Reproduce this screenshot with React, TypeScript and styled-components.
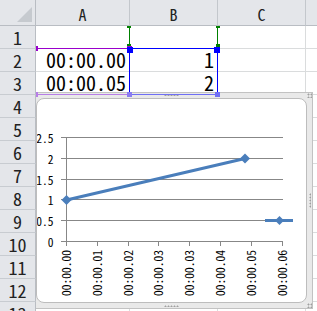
import React from 'react';
import styled, { createGlobalStyle, css } from 'styled-components';

const GlobalStyle = createGlobalStyle`
  html, body {
    margin: 0;
    padding: 0;
    background: #fff;
    overflow: hidden;
  }
  body {
    font-family: "Noto Sans Mono CJK JP", "Noto Sans CJK JP", sans-serif;
    color: #000;
  }
`;

const FONT = '"Noto Sans Mono CJK JP", "Noto Sans CJK JP", sans-serif';

// column D is only a sliver at the right edge, its letter is off screen
const columns = [
  { name: 'A', width: 94 },
  { name: 'B', width: 88 },
  { name: 'C', width: 88 },
  { name: '', width: 88 },
];
const gridColumns = columns.map((c) => `${c.width}px`).join(' ');

const cellData: string[][] = [
  ['', ''],
  ['00:00.00', '1'],
  ['00:00.05', '2'],
];

const rowCount = 13;

const Sheet = styled.div`
  width: 317px;
  height: 311px;
  overflow: hidden;
  display: grid;
  grid-template-columns: 36px 1fr;
  grid-template-rows: 26px 1fr;
`;

const Corner = styled.div`
  position: relative;
  box-sizing: border-box;
  background: #e4e6ea;
  border-right: 1px solid #b9bdc3;
  border-bottom: 1px solid #b9bdc3;
  &::after {
    content: '';
    position: absolute;
    right: 3px;
    bottom: 3px;
    width: 15px;
    height: 15px;
    background: #c6cacf;
    clip-path: polygon(100% 0, 100% 100%, 0 100%);
  }
`;

const ColumnHeaders = styled.div`
  display: grid;
  grid-template-columns: ${gridColumns};
  overflow: hidden;
`;

const ColumnHeader = styled.div`
  box-sizing: border-box;
  height: 26px;
  padding-top: 3px;
  background: #e4e6ea;
  border-right: 1px solid #c3c7cc;
  border-bottom: 1px solid #b9bdc3;
  text-align: center;
  font-size: 16px;
  font-weight: 300;
  line-height: 22px;
  color: #222;
`;

const RowHeaders = styled.div`
  display: grid;
  grid-auto-rows: 23px;
  overflow: hidden;
`;

const RowHeader = styled.div`
  box-sizing: border-box;
  background: #e4e6ea;
  border-right: 1px solid #b9bdc3;
  border-bottom: 1px solid #c8ccd1;
  text-align: center;
  font-size: 18px;
  font-weight: 300;
  line-height: 22px;
  color: #222;
  overflow: hidden;
`;

const Cells = styled.div`
  position: relative;
  overflow: hidden;
`;

const CellGrid = styled.div`
  display: grid;
  grid-template-columns: ${gridColumns};
  grid-auto-rows: 23px;
`;

const Cell = styled.div`
  box-sizing: border-box;
  border-right: 1px solid #dadcdd;
  border-bottom: 1px solid #dadcdd;
  padding-right: 3px;
  text-align: right;
  font-size: 20px;
  font-weight: 300;
  line-height: 21px;
  white-space: nowrap;
  overflow: hidden;
`;

// same grid as the cells, laid over them, for the chart's source ranges
const RangeLayer = styled.div`
  position: absolute;
  inset: 0;
  display: grid;
  grid-template-columns: ${gridColumns};
  grid-auto-rows: 23px;
  pointer-events: none;
  z-index: 3;
`;

const RangeBox = styled.div<{ $col: string; $row: string; $color: string; $bottom: string }>`
  position: relative;
  grid-column: ${(p) => p.$col};
  grid-row: ${(p) => p.$row};
  margin: -1px 0 0 -1px;
  border: 1px solid ${(p) => p.$color};
  border-bottom-color: ${(p) => p.$bottom};
`;

type Corner = 'tl' | 'tr' | 'bl' | 'br';

const cornerCss = (corner: Corner, off: number) => css`
  ${corner[0] === 't' ? `top: ${off}px;` : `bottom: ${off}px;`}
  ${corner[1] === 'l' ? 'left: -3px;' : 'right: -3px;'}
`;

const Handle = styled.span<{ $corner: Corner; $color: string; $size?: number; $off?: number }>`
  position: absolute;
  width: ${(p) => p.$size ?? 5}px;
  height: ${(p) => p.$size ?? 5}px;
  background: ${(p) => p.$color};
  ${(p) => cornerCss(p.$corner, p.$off ?? -3)}
`;

const ChartFrame = styled.div`
  position: absolute;
  left: -6px;
  top: 66px;
  width: 283px;
  height: 217px;
  box-sizing: border-box;
  border: 1px solid #c2c2c2;
  background: #e9e9e9;
  padding: 5px;
  z-index: 2;
`;

const ChartArea = styled.div`
  width: 271px;
  height: 205px;
  box-sizing: border-box;
  background: #fff;
  border: 1px solid #bdbdbd;
  border-radius: 8px;
  overflow: hidden;
`;

type DotSpot = 'top' | 'bottom' | 'right' | 'topRight' | 'bottomRight';

const dotSpots: Record<DotSpot, ReturnType<typeof css>> = {
  top: css`top: 1px; left: 50%; margin-left: -8px; width: 15px; height: 2px;`,
  bottom: css`bottom: 1px; left: 50%; margin-left: -8px; width: 15px; height: 2px;`,
  right: css`right: 1px; top: 50%; margin-top: -8px; width: 2px; height: 15px;`,
  topRight: css`top: 0; right: 0; width: 5px; height: 5px;`,
  bottomRight: css`bottom: 0; right: 0; width: 5px; height: 5px;`,
};

const FrameDots = styled.span<{ $spot: DotSpot }>`
  position: absolute;
  ${(p) => dotSpots[p.$spot]}
  background: radial-gradient(circle, #9f9f9f 0 0.9px, transparent 1.1px) 0 0 / 3px 3px;
`;

const xLabels = [
  '00:00.00',
  '00:00.01',
  '00:00.02',
  '00:00.03',
  '00:00.03',
  '00:00.04',
  '00:00.05',
  '00:00.06',
];
const yValues = [0, 0.5, 1, 1.5, 2, 2.5];

const yPos = (v: number) => Math.round(241.5 - v * 41.6 - 0.5) + 0.5;
const xTick = (i: number) => Math.round(66 + i * 30.8) + 0.5;

const SERIES = '#4a7ebb';
const AXIS = '#878787';

const diamond = (cx: number, cy: number, r: number) =>
  `${cx},${cy - r} ${cx + r},${cy} ${cx},${cy + r} ${cx - r},${cy}`;

// drawn in sheet pixel coordinates, viewBox starts at the chart area's inner corner
const Chart = () => (
  <svg width={269} height={203} viewBox="37 99 269 203" style={{ display: 'block' }}>
    {yValues.map((v) => (
      <g key={v}>
        <line x1={61} x2={283} y1={yPos(v)} y2={yPos(v)} stroke={AXIS} strokeWidth={1} />
        <text x={53.5} y={yPos(v) + 5} textAnchor="end" fontSize={11.5} fontFamily={FONT} fill="#000">
          {v}
        </text>
      </g>
    ))}
    <line x1={66.5} x2={66.5} y1={137.5} y2={246} stroke={AXIS} strokeWidth={1} />
    {xLabels.map((label, i) => (
      <g key={i}>
        <line x1={xTick(i)} x2={xTick(i)} y1={241.5} y2={246} stroke={AXIS} strokeWidth={1} />
        <text
          transform={`translate(${xTick(i) + 4}, 250) rotate(-90)`}
          textAnchor="end"
          fontSize={11.5}
          fontFamily={FONT}
          fill="#000"
        >
          {label}
        </text>
      </g>
    ))}
    <line x1={66.5} y1={200} x2={245} y2={158.5} stroke={SERIES} strokeWidth={3} strokeLinecap="round" />
    <polygon points={diamond(66.5, 200, 5)} fill={SERIES} />
    <polygon points={diamond(245, 158.5, 5)} fill={SERIES} />
    {/* legend key */}
    <line x1={265} y1={220.5} x2={293} y2={220.5} stroke={SERIES} strokeWidth={3} />
    <polygon points={diamond(279.5, 220.5, 4.5)} fill={SERIES} />
  </svg>
);

const App = () => {
  const rows = Array.from({ length: rowCount }, (_, i) => i);
  return (
    <>
      <GlobalStyle />
      <Sheet>
        <Corner />
        <ColumnHeaders>
          {columns.map((c, i) => (
            <ColumnHeader key={i}>{c.name}</ColumnHeader>
          ))}
        </ColumnHeaders>
        <RowHeaders>
          {rows.map((r) => (
            <RowHeader key={r}>{r + 1}</RowHeader>
          ))}
        </RowHeaders>
        <Cells>
          <CellGrid>
            {rows.map((r) =>
              columns.map((c, ci) => <Cell key={`${r}-${ci}`}>{cellData[r]?.[ci] ?? ''}</Cell>)
            )}
          </CellGrid>

          <RangeLayer>
            <RangeBox $col="2" $row="1" $color="#008000" $bottom="#008000">
              <Handle $corner="tl" $color="#008000" $size={4} $off={-2} />
              <Handle $corner="tr" $color="#008000" $size={4} $off={-2} />
              <Handle $corner="bl" $color="#008000" $size={4} $off={0} />
              <Handle $corner="br" $color="#008000" $size={4} $off={0} />
            </RangeBox>
            <RangeBox $col="1" $row="2 / 4" $color="#9900cc" $bottom="#b77ee6">
              <Handle $corner="tl" $color="#9900cc" />
              <Handle $corner="tr" $color="#9900cc" />
              <Handle $corner="bl" $color="#b77ee6" />
              <Handle $corner="br" $color="#8a7cf0" />
            </RangeBox>
            <RangeBox $col="2" $row="2 / 4" $color="#0000ff" $bottom="#6f6ff5">
              <Handle $corner="tl" $color="#0000ff" $size={6} $off={-2} />
              <Handle $corner="tr" $color="#0000ff" $size={6} $off={-2} />
              <Handle $corner="bl" $color="#8a7cf0" />
              <Handle $corner="br" $color="#6f6ff5" />
            </RangeBox>
          </RangeLayer>

          <ChartFrame>
            <ChartArea>
              <Chart />
            </ChartArea>
            <FrameDots $spot="top" />
            <FrameDots $spot="bottom" />
            <FrameDots $spot="right" />
            <FrameDots $spot="topRight" />
            <FrameDots $spot="bottomRight" />
          </ChartFrame>
        </Cells>
      </Sheet>
    </>
  );
};

export default App;
